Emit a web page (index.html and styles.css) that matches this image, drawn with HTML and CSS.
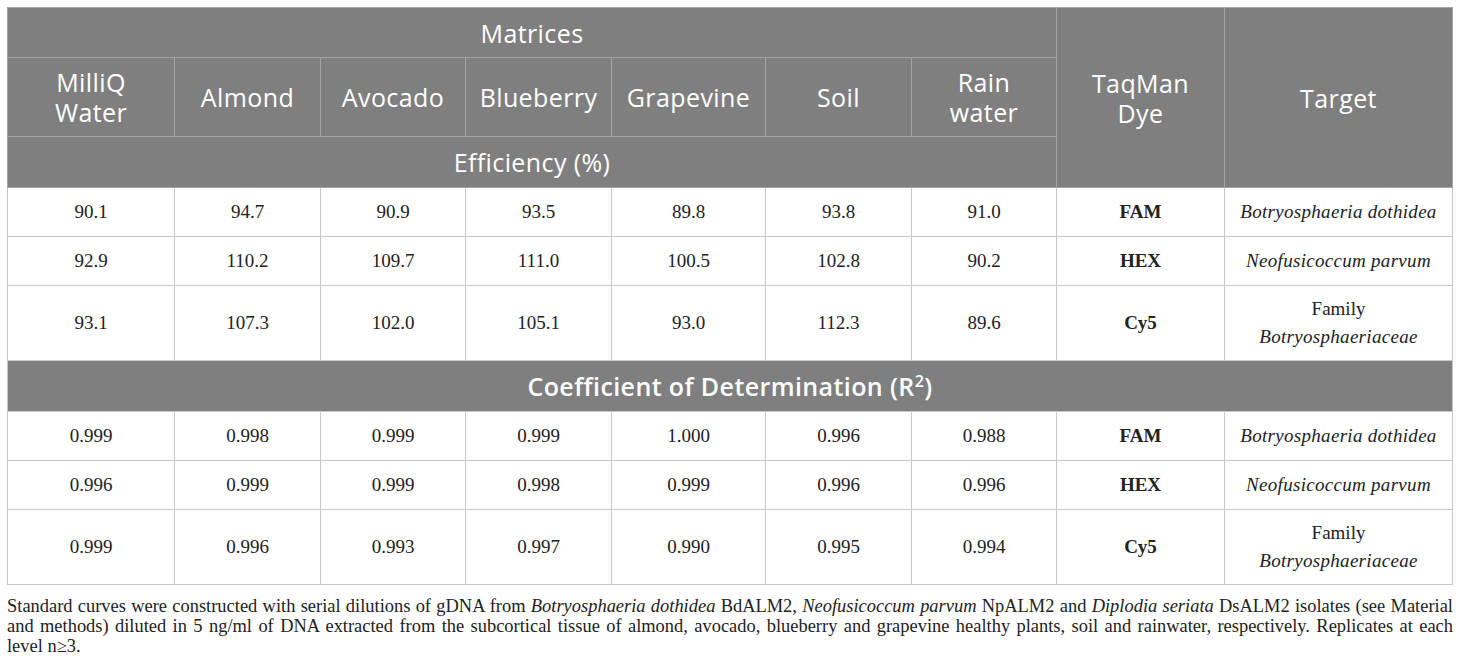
FILE: index.html
```html
<!DOCTYPE html>
<html lang="en">
<head>
  <meta charset="UTF-8">
  <title>Efficiency and R2 by matrix</title>
  <link rel="stylesheet" href="styles.css">
</head>
<body>

  <table class="tabla">
    <colgroup>
      <col style="width:167px">
      <col style="width:146px">
      <col style="width:145px">
      <col style="width:146px">
      <col style="width:154px">
      <col style="width:146px">
      <col style="width:145px">
      <col style="width:168px">
      <col>
    </colgroup>
    <thead>
      <tr class="baslik-1">
        <th colspan="7">Matrices</th>
        <th rowspan="3">TaqMan<br>Dye</th>
        <th rowspan="3">Target</th>
      </tr>
      <tr class="baslik-2">
        <th>MilliQ<br>Water</th>
        <th>Almond</th>
        <th>Avocado</th>
        <th>Blueberry</th>
        <th>Grapevine</th>
        <th>Soil</th>
        <th>Rain<br>water</th>
      </tr>
      <tr class="baslik-3">
        <th colspan="7">Efficiency (%)</th>
      </tr>
    </thead>
    <tbody>
      <tr>
        <td>90.1</td><td>94.7</td><td>90.9</td><td>93.5</td><td>89.8</td><td>93.8</td><td>91.0</td>
        <td class="boya">FAM</td>
        <td class="hedef"><i>Botryosphaeria dothidea</i></td>
      </tr>
      <tr>
        <td>92.9</td><td>110.2</td><td>109.7</td><td>111.0</td><td>100.5</td><td>102.8</td><td>90.2</td>
        <td class="boya">HEX</td>
        <td class="hedef"><i>Neofusicoccum parvum</i></td>
      </tr>
      <tr>
        <td>93.1</td><td>107.3</td><td>102.0</td><td>105.1</td><td>93.0</td><td>112.3</td><td>89.6</td>
        <td class="boya">Cy5</td>
        <td class="hedef iki-satir">Family<br><i>Botryosphaeriaceae</i></td>
      </tr>
      <tr class="ara-baslik">
        <th colspan="9">Coefficient of Determination (R<sup>2</sup>)</th>
      </tr>
      <tr>
        <td>0.999</td><td>0.998</td><td>0.999</td><td>0.999</td><td>1.000</td><td>0.996</td><td>0.988</td>
        <td class="boya">FAM</td>
        <td class="hedef"><i>Botryosphaeria dothidea</i></td>
      </tr>
      <tr>
        <td>0.996</td><td>0.999</td><td>0.999</td><td>0.998</td><td>0.999</td><td>0.996</td><td>0.996</td>
        <td class="boya">HEX</td>
        <td class="hedef"><i>Neofusicoccum parvum</i></td>
      </tr>
      <tr>
        <td>0.999</td><td>0.996</td><td>0.993</td><td>0.997</td><td>0.990</td><td>0.995</td><td>0.994</td>
        <td class="boya">Cy5</td>
        <td class="hedef iki-satir">Family<br><i>Botryosphaeriaceae</i></td>
      </tr>
    </tbody>
  </table>

  <p class="dipnot">Standard curves were constructed with serial dilutions of gDNA from <i>Botryosphaeria dothidea</i> BdALM2, <i>Neofusicoccum parvum</i> NpALM2 and <i>Diplodia seriata</i> DsALM2 isolates (see Material and methods) diluted in 5 ng/ml of DNA extracted from the subcortical tissue of almond, avocado, blueberry and grapevine healthy plants, soil and rainwater, respectively. Replicates at each level&nbsp;n≥3.</p>

</body>
</html>
```

FILE: styles.css
```css
body {
  margin: 0;
  padding: 7px;
  background-color: white;
  font-family: "Liberation Serif", serif;
  color: #222;
}

.tabla {
  width: 1446px;
  border-collapse: collapse;
  table-layout: fixed;
  border: 1px solid #c8c8c8;
}

.tabla th {
  background-color: #7f7f7f;
  color: white;
  font-family: "Open Sans", sans-serif;
  font-size: 25px;
  font-weight: normal;
  letter-spacing: 0.4px;
  line-height: 30px;
  padding: 9px 2px;
  border: 1px solid #a3a3a3;
  text-align: center;
  vertical-align: middle;
}

.baslik-1 th {
  height: 31px;
}

.baslik-2 th {
  height: 60px;
}

.baslik-3 th {
  height: 32px;
}

.ara-baslik th {
  font-weight: 600;
  height: 32px;
  border-color: #c8c8c8;
}

.ara-baslik sup {
  font-size: 16px;
  line-height: 0;
}

.tabla td {
  font-size: 19px;
  line-height: 28px;
  padding: 10px 4px;
  border: 1px solid #c8c8c8;
  text-align: center;
  vertical-align: middle;
}

.boya {
  font-weight: bold;
}

.hedef i {
  letter-spacing: 0.3px;
}

.tabla .iki-satir {
  padding: 9px 4px;
}

.dipnot {
  margin: 11px 0 0;
  font-size: 18.45px;
  line-height: 20px;
  text-align: justify;
}
```
